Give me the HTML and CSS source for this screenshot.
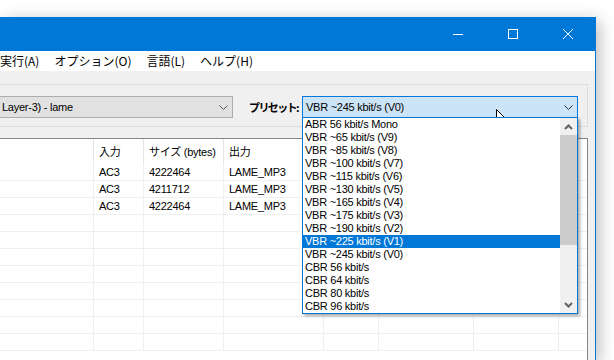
FILE: index.html
```html
<!DOCTYPE html>
<html lang="ja">
<head>
    <meta charset="UTF-8">
    <title>エンコード設定</title>
    <link rel="stylesheet" href="styles.css">
</head>
<body>

    <div class="window">
        <!-- title bar -->
        <div class="titlebar">
            <span class="caption-btn">
                <svg width="10" height="10" viewBox="0 0 10 10"><path d="M0 5.5h10" stroke="#fff" stroke-width="1"/></svg>
            </span>
            <span class="caption-btn">
                <svg width="10" height="10" viewBox="0 0 10 10"><rect x="0.5" y="0.5" width="9" height="9" fill="none" stroke="#fff" stroke-width="1"/></svg>
            </span>
            <span class="caption-btn">
                <svg width="10" height="10" viewBox="0 0 10 10"><path d="M0 0L10 10M10 0L0 10" stroke="#fff" stroke-width="1"/></svg>
            </span>
        </div>

        <!-- menu -->
        <div class="menubar">
            <span>実行(A)</span>
            <span>オプション(O)</span>
            <span>言語(L)</span>
            <span>ヘルプ(H)</span>
        </div>

        <div class="client">
            <div class="groupbox">
                <div class="combo combo-codec">
                    <span>Layer-3) - lame</span>
                    <svg width="9" height="5" viewBox="0 0 9 5"><path d="M0.5 0.5L4.5 4.5L8.5 0.5" fill="none" stroke="#555" stroke-width="1"/></svg>
                </div>
                <label class="preset-label">プリセット:</label>
                <div class="combo-wrap">
                    <div class="combo combo-preset">
                        <span>VBR ~245 kbit/s (V0)</span>
                        <svg width="9" height="5" viewBox="0 0 9 5"><path d="M0.5 0.5L4.5 4.5L8.5 0.5" fill="none" stroke="#333" stroke-width="1"/></svg>
                    </div>

                    <!-- open dropdown list -->
                    <div class="dropdown">
                        <ul class="options">
                            <li>ABR 56 kbit/s Mono</li>
                            <li>VBR ~65 kbit/s (V9)</li>
                            <li>VBR ~85 kbit/s (V8)</li>
                            <li>VBR ~100 kbit/s (V7)</li>
                            <li>VBR ~115 kbit/s (V6)</li>
                            <li>VBR ~130 kbit/s (V5)</li>
                            <li>VBR ~165 kbit/s (V4)</li>
                            <li>VBR ~175 kbit/s (V3)</li>
                            <li>VBR ~190 kbit/s (V2)</li>
                            <li class="selected">VBR ~225 kbit/s (V1)</li>
                            <li>VBR ~245 kbit/s (V0)</li>
                            <li>CBR 56 kbit/s</li>
                            <li>CBR 64 kbit/s</li>
                            <li>CBR 80 kbit/s</li>
                            <li>CBR 96 kbit/s</li>
                        </ul>
                        <div class="scrollbar">
                            <div class="sb-arrow">
                                <svg width="9" height="6" viewBox="0 0 9 6"><path d="M1 5L4.5 1.5L8 5" fill="none" stroke="#606060" stroke-width="2"/></svg>
                            </div>
                            <div class="sb-thumb"></div>
                            <div class="sb-track"></div>
                            <div class="sb-arrow">
                                <svg width="9" height="6" viewBox="0 0 9 6"><path d="M1 1L4.5 4.5L8 1" fill="none" stroke="#606060" stroke-width="2"/></svg>
                            </div>
                        </div>
                    </div>
                </div>
            </div>

            <!-- file list -->
            <div class="grid">
                <div class="row header">
                    <div></div><div>入力</div><div>サイズ (bytes)</div><div>出力</div><div></div><div></div><div></div><div></div>
                </div>
                <div class="row">
                    <div></div><div>AC3</div><div>4222464</div><div>LAME_MP3</div><div></div><div></div><div></div><div></div>
                </div>
                <div class="row">
                    <div></div><div>AC3</div><div>4211712</div><div>LAME_MP3</div><div></div><div></div><div></div><div></div>
                </div>
                <div class="row">
                    <div></div><div>AC3</div><div>4222464</div><div>LAME_MP3</div><div></div><div></div><div></div><div></div>
                </div>
                <div class="row"><div></div><div></div><div></div><div></div><div></div><div></div><div></div><div></div></div>
                <div class="row"><div></div><div></div><div></div><div></div><div></div><div></div><div></div><div></div></div>
                <div class="row"><div></div><div></div><div></div><div></div><div></div><div></div><div></div><div></div></div>
                <div class="row"><div></div><div></div><div></div><div></div><div></div><div></div><div></div><div></div></div>
                <div class="row"><div></div><div></div><div></div><div></div><div></div><div></div><div></div><div></div></div>
                <div class="row"><div></div><div></div><div></div><div></div><div></div><div></div><div></div><div></div></div>
                <div class="row"><div></div><div></div><div></div><div></div><div></div><div></div><div></div><div></div></div>
                <div class="row"><div></div><div></div><div></div><div></div><div></div><div></div><div></div><div></div></div>
            </div>
        </div>
    </div>

    <!-- mouse pointer -->
    <svg class="cursor" width="13" height="21" viewBox="0 0 13 21">
        <path d="M0.5 0.5V17.5L4.5 13.5L7.5 20.5L10 19.5L7 12.5H12.5Z" fill="#fff" stroke="#000" stroke-width="1" stroke-linejoin="miter"/>
    </svg>

</body>
</html>
```

FILE: styles.css
```css
html {
    overflow: hidden;
}
body {
    margin: 0;
    padding-top: 17px;
    background: #fff;
    font-family: "Liberation Sans", "Noto Sans CJK JP", sans-serif;
    font-size: 11px;
    letter-spacing: -0.25px;
    color: #000;
}
.window {
    width: 595px;
    height: 343px;
    border-right: 1px solid #0078d7;
    background: #f0f0f0;
    box-shadow: 3px 4px 16px rgba(0, 0, 0, 0.28);
    display: flex;
    flex-direction: column;
}
.titlebar {
    height: 34px;
    flex-shrink: 0;
    background: #0078d7;
    display: flex;
    justify-content: flex-end;
}
.caption-btn {
    width: 55px;
    display: flex;
    align-items: center;
    justify-content: center;
}
.menubar {
    height: 20px;
    flex-shrink: 0;
    background: #fff;
    display: flex;
    gap: 15px;
    align-items: center;
    line-height: 20px;
    font-family: "Noto Sans CJK JP", sans-serif;
    font-size: 12px;
    letter-spacing: 0;
}
.client {
    flex: 1;
    min-height: 0;
    padding: 13px 7px 0 0;
    display: flex;
    flex-direction: column;
}
.groupbox {
    height: 43px;
    flex-shrink: 0;
    box-sizing: border-box;
    border: 1px solid #dcdcdc;
    border-left: none;
    display: flex;
    align-items: flex-start;
    padding-top: 11px;
}
.combo {
    height: 22px;
    box-sizing: border-box;
    display: flex;
    align-items: center;
    justify-content: space-between;
    padding: 0 4px 0 3px;
    white-space: nowrap;
}
.combo-codec {
    width: 235px;
    margin-left: -2px;
    background: #e1e1e1;
    border: 1px solid #adadad;
}
.preset-label {
    margin-left: 16px;
    width: 53px;
    flex-shrink: 0;
    white-space: nowrap;
    line-height: 22px;
    font-weight: bold;
    font-family: "Noto Sans CJK JP", sans-serif;
    letter-spacing: -1.6px;
}
.combo-wrap {
    position: relative;
}
.combo-preset {
    width: 276px;
    background: #cce4f7;
    border: 1px solid #0078d7;
}
.dropdown {
    position: absolute;
    left: 0;
    top: 21px;
    width: 276px;
    height: 197px;
    box-sizing: border-box;
    border: 1px solid #0078d7;
    background: #fff;
    display: flex;
    box-shadow: 2px 2px 3px rgba(0, 0, 0, 0.35);
    z-index: 2;
}
.options {
    list-style: none;
    margin: 0;
    padding: 0;
    width: 257px;
}
.options li {
    height: 13px;
    line-height: 13px;
    padding-left: 2px;
    white-space: nowrap;
}
.options li.selected {
    background: #0078d7;
    color: #fff;
}
.scrollbar {
    width: 17px;
    background: #f0f0f0;
    display: flex;
    flex-direction: column;
}
.sb-arrow {
    height: 17px;
    display: flex;
    align-items: center;
    justify-content: center;
}
.sb-thumb {
    height: 110px;
    background: #cdcdcd;
}
.sb-track {
    flex: 1;
}
.grid {
    flex: 1;
    min-height: 0;
    overflow: hidden;
    margin-top: 11px;
    border-top: 1px solid #828790;
    border-right: 1px solid #828790;
    background: #fff;
}
.row {
    display: grid;
    grid-template-columns: 94px 50px 80px 100px 55px 95px 85px 1fr;
    height: 17px;
    border-bottom: 1px solid #efefef;
    box-sizing: border-box;
}
.row div {
    border-right: 1px solid #efefef;
    padding-left: 5px;
    line-height: 17px;
    white-space: nowrap;
}
.row div:last-child {
    border-right: none;
}
.row.header {
    height: 25px;
    border-bottom: none;
}
.row.header div {
    line-height: 27px;
    border-right-color: #e5e5e5;
}
.cursor {
    position: absolute;
    left: 496px;
    top: 109px;
}
```
